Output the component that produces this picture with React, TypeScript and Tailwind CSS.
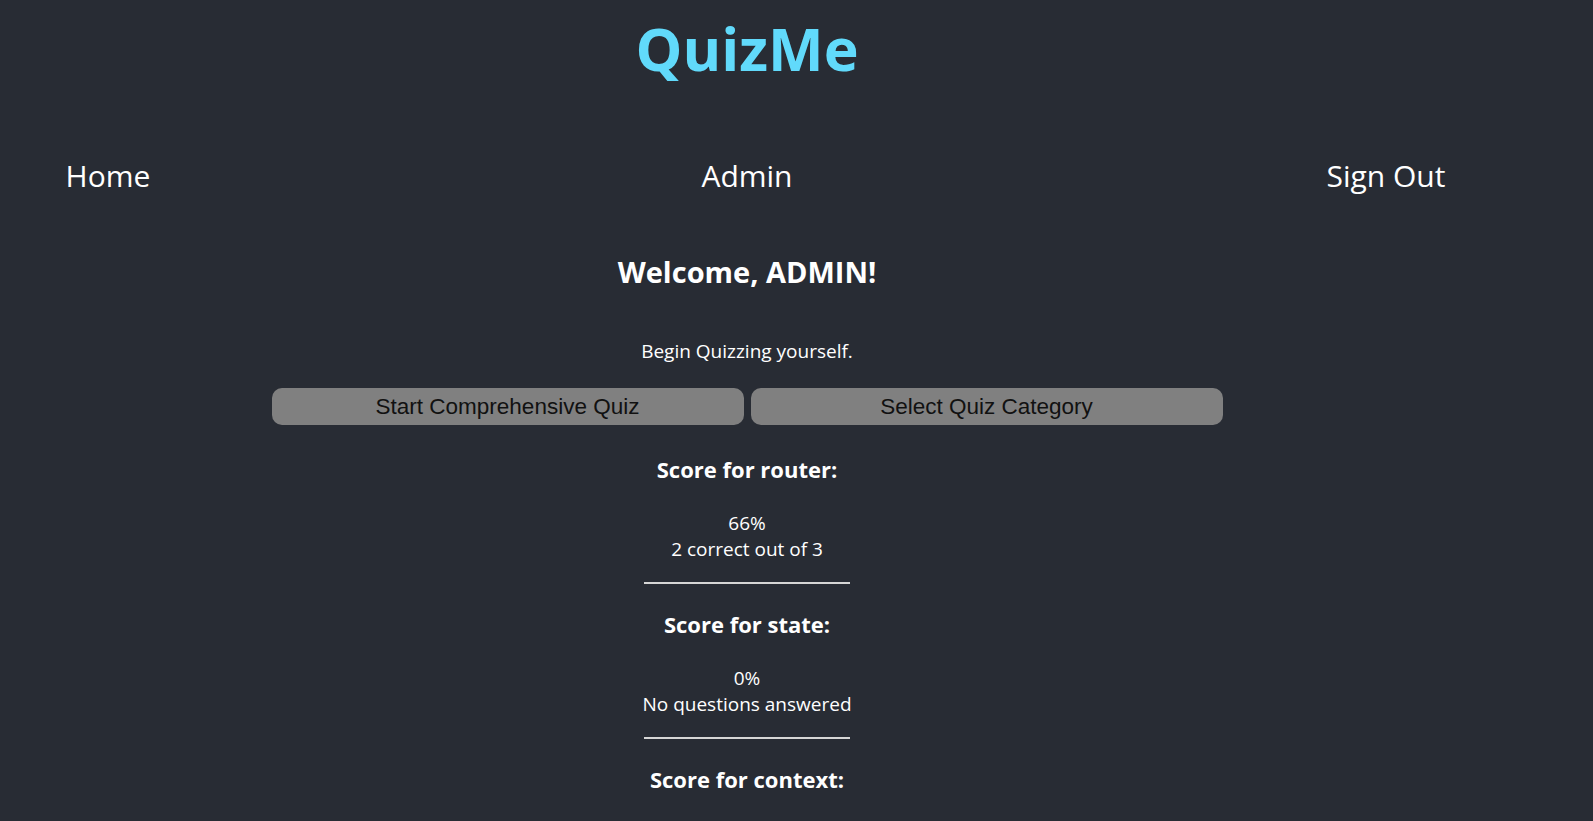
import React from "react";

type Score = { topic: string; percent: string; detail: string };

const scores: Score[] = [
    { topic: "router", percent: "66%", detail: "2 correct out of 3" },
    { topic: "state", percent: "0%", detail: "No questions answered" },
    { topic: "context", percent: "0%", detail: "No questions answered" },
];

export default function App() {
    return (
        <div className="min-h-screen w-full bg-[#282c34] text-white font-['Open_Sans','Noto_Sans',sans-serif]">
            <div className="w-[1494px] flex flex-col items-center">
                <h1 className="mt-[19px] text-[59px] leading-none font-bold text-[#61dafb]">QuizMe</h1>

                <nav className="mt-[83px] w-full flex justify-between text-[30px] leading-none">
                    <a className="w-[216px] text-center">Home</a>
                    <a className="w-[216px] text-center">Admin</a>
                    <a className="w-[216px] text-center">Sign Out</a>
                </nav>

                <h2 className="mt-[66px] text-[29px] leading-none font-bold">Welcome, ADMIN!</h2>
                <p className="mt-[56px] text-[19px] leading-none">Begin Quizzing yourself.</p>

                <div className="mt-[27px] flex gap-[7px] font-['Liberation_Sans',Arial,sans-serif]">
                    <button className="w-[472px] h-[37px] rounded-[10px] bg-[#808080] text-[22.5px] text-[#111]">
                        Start Comprehensive Quiz
                    </button>
                    <button className="w-[472px] h-[37px] rounded-[10px] bg-[#808080] text-[22.5px] text-[#111]">
                        Select Quiz Category
                    </button>
                </div>

                <div className="mt-[33px] flex flex-col items-center">
                    {scores.map((s, i) => (
                        <ScoreBlock key={s.topic} score={s} first={i === 0} />
                    ))}
                </div>
            </div>
        </div>
    );
}

function ScoreBlock({ score, first }: { score: Score; first: boolean }) {
    return (
        <div className={`flex flex-col items-center ${first ? "" : "mt-[29px]"}`}>
            <h3 className="text-[22px] leading-none font-bold">Score for {score.topic}:</h3>
            <div className="mt-[30px] text-[19px] leading-[26px] text-center">
                <p>{score.percent}</p>
                <p>{score.detail}</p>
            </div>
            <hr className="mt-[20px] w-[206px] h-[2px] border-0 bg-[#d6d6d6]" />
        </div>
    );
}
